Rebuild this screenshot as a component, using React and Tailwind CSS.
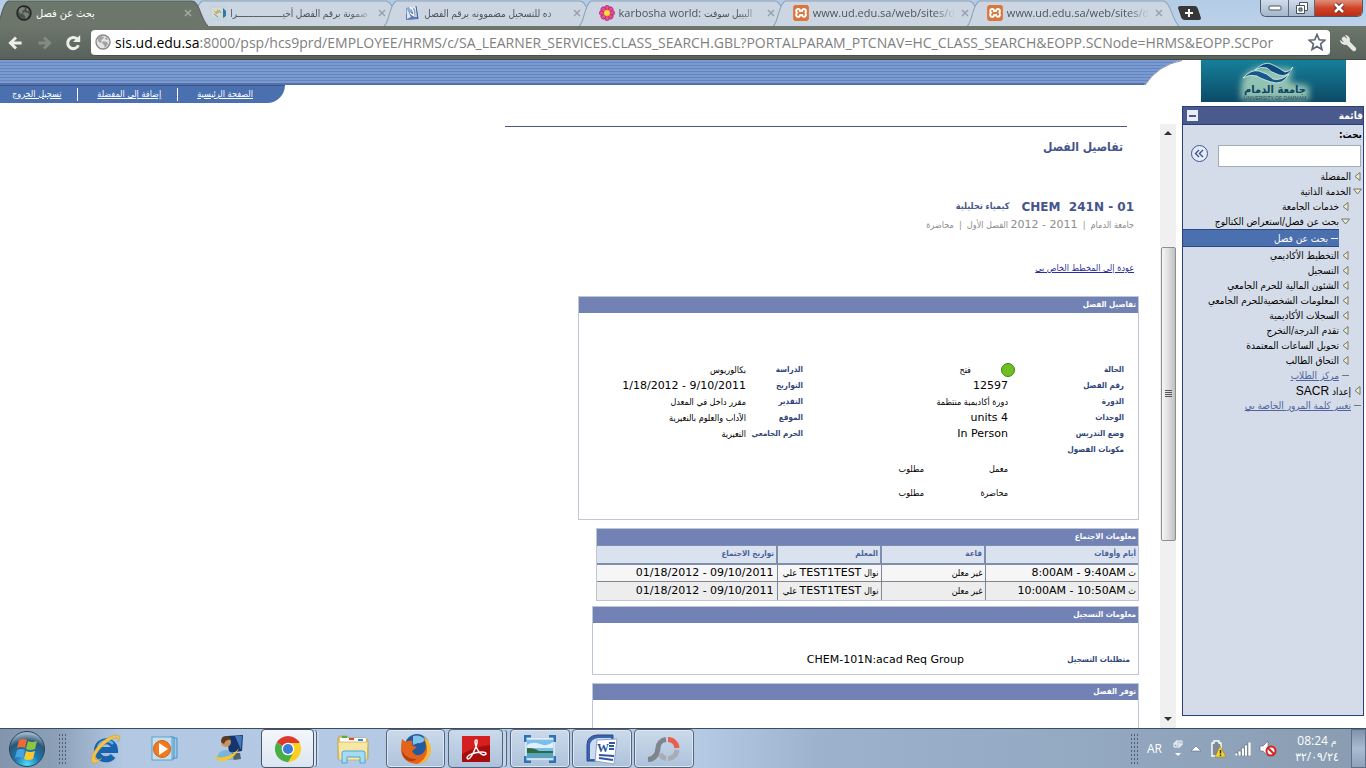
import { useState } from 'react';
import { SiXampp } from 'react-icons/si';

const LATIN = "font-['Open_Sans','DejaVu_Sans_Condensed','DejaVu_Sans',sans-serif]";
const URL_REST = ':8000/psp/hcs9prd/EMPLOYEE/HRMS/c/SA_LEARNER_SERVICES.CLASS_SEARCH.GBL?PORTALPARAM_PTCNAV=HC_CLASS_SEARCH&EOPP.SCNode=HRMS&EOPP.SCPor';

function Globe({ dark }) {
  return (
    <svg viewBox="0 0 16 16" className="w-4 h-4 shrink-0">
      <circle cx="8" cy="8" r="7" fill={dark ? '#4b504c' : '#e4e4e4'} stroke={dark ? '#1f2321' : '#8a8a8a'} strokeWidth="1.4" />
      <path d="M3 4l3-2 3 1-1 2-2 1 1 2-2 1-2-2zM8 7l4 1 1 2-3 4-1-3-2-2zM11 3l2 2-1 1-2-1z" fill={dark ? '#7c837e' : '#a3a3a3'} />
    </svg>
  );
}

function PictureIcon() {
  return (
    <svg viewBox="0 0 16 16" className="w-4 h-4 shrink-0">
      <rect width="16" height="16" fill="#c5d5de" />
      <rect x="2" y="3" width="10" height="9" fill="#d8dccb" />
      <path d="M3 5l3 2 2-3 1 4-3 1z" fill="#c9a568" />
      <path d="M4 9l4 3M9 5l2 3" stroke="#5d9ab8" />
      <path d="M13 3l3 3v5l-3 2z" fill="#2f79a8" />
    </svg>
  );
}

function PageIcon() {
  return (
    <svg viewBox="0 0 16 16" className="w-4 h-4 shrink-0">
      <path d="M2 3l3-1 1 3 4-2 2-1 1 12-11 1z" fill="#8ba4cc" />
      <path d="M2 9l11-3 1 8-12 1z" fill="#5c7bb2" />
      <path d="M3 4l4 8-4 2z" fill="#dde6f3" />
      <path d="M6 2q4 2 4 9L6 8M10 2l2 2v8" stroke="#fff" fill="none" strokeWidth="1.2" />
      <path d="M12 1l2 13" stroke="#3d5f96" fill="none" />
    </svg>
  );
}

function FlowerIcon() {
  return (
    <svg viewBox="0 0 16 16" className="w-4 h-4 shrink-0">
      {[0, 45, 90, 135, 180, 225, 270, 315].map((a) => (
        <circle key={a} cx="8" cy="2.800" r="2.400" fill="#ec4a96" stroke="#a81d62" strokeWidth=".7" transform={`rotate(${a} 8 8)`} />
      ))}
      <circle cx="8" cy="8" r="3.2" fill="#ffd84a" stroke="#c87f2a" strokeWidth=".6" />
    </svg>
  );
}

function XamppIcon() {
  return <SiXampp className="w-4 h-4 shrink-0 rounded-xs bg-white text-[#d9763c]" />;
}

const tabs = [
  { title: 'بحث عن فصل', icon: <Globe dark />, active: true },
  { title: 'ضمونة برقم الفصل أخيـــــــــــــــــرا', icon: <PictureIcon /> },
  { title: 'ده للتسجيل مضموونه برقم الفصل', icon: <PageIcon /> },
  { title: 'karbosha world:', tail: 'البيبل سوفت', icon: <FlowerIcon /> },
  { title: 'www.ud.edu.sa/web/sites/d', icon: <XamppIcon /> },
  { title: 'www.ud.edu.sa/web/sites/d', icon: <XamppIcon /> },
];

function Tab({ tab }) {
  const isArabic = /^[\u0600-\u06ff]/.test(tab.title);
  return (
    <div className={`relative flex-1 min-w-0 h-[26px] ${tab.active ? 'z-10' : ''}`}>
      <svg viewBox="0 0 206 26" preserveAspectRatio="none" className="absolute -left-1 top-0 w-[212px] h-[26px]">
        <path
          d="M0 26C5 24 5 4 12 1H190C198 1 199 20 206 26"
          fill={tab.active ? '#6c766b' : '#cbd6e2'}
          stroke={tab.active ? '#566056' : '#8fa1b6'}
        />
      </svg>
      <div className="relative flex items-center h-[26px] pl-4 gap-1">
        {tab.icon}
        <span className={`flex-1 min-w-0 overflow-hidden whitespace-nowrap ${isArabic ? 'text-[10px]' : 'text-[11px]'} ${tab.active ? 'text-white text-[11px]' : 'text-[#4c545c] [mask-image:linear-gradient(90deg,#000_85%,transparent)]'}`}>
          {tab.title}
          {tab.tail && <>&nbsp;<bdi className="text-[10px]">{tab.tail}</bdi></>}
        </span>
        <button aria-label="Close tab" className="w-3 h-3 shrink-0">
          <svg viewBox="0 0 12 12" className="w-3 h-3">
            <path d="M3 3l6 6M9 3l-6 6" stroke={tab.active ? '#a3aaa1' : '#97a2ae'} strokeWidth="1.5" />
          </svg>
        </button>
      </div>
    </div>
  );
}

function WindowButtons() {
  return (
    <div className="flex h-[17px] w-[103px] rounded-b-md border border-t-0 border-[#4d5a6b] overflow-hidden">
      <button aria-label="Minimize" className="w-7 flex items-center justify-center bg-linear-to-b from-[#d0dcea] to-[#a4b6cb] border-r border-[#5c6a7c]">
        <svg viewBox="0 0 14 6" className="w-[14px] h-[6px]"><rect x="1" y="1" width="12" height="4" rx="1" fill="#fff" stroke="#47525f" /></svg>
      </button>
      <button aria-label="Restore" className="w-[26px] flex items-center justify-center bg-linear-to-b from-[#d0dcea] to-[#a4b6cb] border-r border-[#5c6a7c]">
        <svg viewBox="0 0 12 12" className="w-3 h-3" fill="#fff" stroke="#47525f">
          <path d="M3.500 .5h8v8h-8z" />
          <path d="M.5 3.500h8v8h-8z" />
          <path d="M3 6h3v3H3z" fill="#8b9bb0" />
        </svg>
      </button>
      <button aria-label="Close" className="flex-1 flex items-center justify-center bg-linear-to-b from-[#e08e78] via-[#cf4326] to-[#bb2d16]">
        <svg viewBox="0 0 14 12" className="w-[14px] h-3">
          <path d="M3 2l8 8M11 2l-8 8" stroke="#5b2a24" strokeWidth="4.500" />
          <path d="M3 2l8 8M11 2l-8 8" stroke="#fff" strokeWidth="2.600" />
        </svg>
      </button>
    </div>
  );
}

function BrowserChrome() {
  return (
    <header className={`shrink-0 ${LATIN}`}>
      <div className="flex h-[26px] bg-linear-to-b from-[#b3cce6] to-[#bdd2ea]">
        <div className="flex flex-1 min-w-0 max-w-[1165px]">
          {tabs.map((t, i) => <Tab key={i} tab={t} />)}
        </div>
        <button aria-label="New tab" className="relative z-10 ml-3 mt-[6px] w-6 h-[15px]">
          <svg viewBox="0 0 24 15" className="w-6 h-[15px]">
            <path d="M1 2q0-2 2-2h15q2 0 3 3l3 9q0 2-2 2H8q-3 0-4-3z" fill="#353837" />
            <path d="M8 7h8M12 3v8" stroke="#fff" strokeWidth="2" />
          </svg>
        </button>
        <div className="ml-auto pr-[3px]"><WindowButtons /></div>
      </div>
      <div className="flex items-center h-[34px] pl-2 pr-2 border-b border-[#414b43] bg-linear-to-b from-[#6c766b] to-[#58625a]">
        <button aria-label="Back" className="w-5 h-5 mr-2">
          <svg viewBox="0 0 20 20" className="w-4 h-5"><path d="M17 10H4M10 3L3 10l7 7" stroke="#eceeec" strokeWidth="3.600" fill="none" /></svg>
        </button>
        <button aria-label="Forward" className="w-5 h-5 mr-2">
          <svg viewBox="0 0 20 20" className="w-4 h-5"><path d="M3 10h13M10 3l7 7-7 7" stroke="#838b82" strokeWidth="3.600" fill="none" /></svg>
        </button>
        <button aria-label="Reload" className="w-5 h-5 mr-[7px]">
          <svg viewBox="0 0 20 20" className="w-[18px] h-[18px]">
            <path d="M16 12.500A6.200 6.200 0 1 1 14.500 5.500" stroke="#eceeec" strokeWidth="3.400" fill="none" />
            <path d="M18 1v8h-8z" fill="#eceeec" />
          </svg>
        </button>
        <div className="flex flex-1 min-w-0 items-center h-[26px] px-1 gap-1 bg-white rounded-sm border-b border-[#474f48]">
          <Globe />
          <div className="flex-1 min-w-0 overflow-hidden whitespace-nowrap text-[14px] text-[#808080]">
            <span className="text-black">sis.ud.edu.sa</span>{URL_REST}
          </div>
          <button aria-label="Bookmark" className="w-[18px] h-[18px]">
            <svg viewBox="0 0 24 24" className="w-[18px] h-[18px]">
              <path d="M12 2l3 7 7.500.600-5.700 5 1.800 7.400-6.600-4-6.600 4 1.800-7.400-5.700-5L9 9z" fill="#fff" stroke="#5a6475" strokeWidth="2.200" />
            </svg>
          </button>
        </div>
        <button aria-label="Settings" className="w-5 h-5 ml-2">
          <svg viewBox="0 0 20 20" className="w-5 h-5">
            <path d="M6 6l10 10" stroke="#e4e7e3" strokeWidth="4.500" strokeLinecap="round" />
            <path d="M7 2a5 5 0 1 1-5 5l3 2 3-1 1-3z" fill="#e4e7e3" />
          </svg>
        </button>
      </div>
    </header>
  );
}

const portalLinks = ['الصفحة الرئيسية', 'إضافة إلى المفضلة', 'تسجيل الخروج'];

function Banner() {
  return (
    <div className="shrink-0">
      <div className="flex h-[25px]">
        <div className="flex-1 border-b-2 border-[#5670a8] bg-[repeating-linear-gradient(180deg,#7b9bd0_0px,#7b9bd0_2px,#6385c2_2px,#6385c2_3px)]" />
        <svg viewBox="0 0 38 25" className="w-[38px] h-[25px]">
          <defs>
            <pattern id="stripes" width="38" height="3" patternUnits="userSpaceOnUse">
              <rect width="38" height="2" fill="#7b9bd0" />
              <rect y="2" width="38" height="1" fill="#6385c2" />
            </pattern>
          </defs>
          <path d="M0 0H38Q14 5 1 25H0z" fill="url(#stripes)" />
          <path d="M38 .5Q14 5 1 25" fill="none" stroke="#8a93ad" />
        </svg>
      </div>
      <nav dir="rtl" className="flex items-center justify-between w-[285px] h-[18px] pr-8 pl-3 rounded-br-[18px] bg-[#4a70b0] border-t border-[#3c5690] text-[9px] text-white">
        {portalLinks.map((label, i) => (
          <a key={label} href="#" className={`underline ${i > 0 ? 'border-r border-white pr-4' : ''}`}>{label}</a>
        ))}
      </nav>
    </div>
  );
}

function Scrollbar() {
  return (
    <div className="flex flex-col items-center w-4 shrink-0 mr-[6px] bg-[#f0f0f0]">
      <svg viewBox="0 0 8 4" className="w-2 h-1 mt-[7px]"><path d="M0 4l4-4 4 4z" fill="#333" /></svg>
      <div className="mt-28 flex items-center justify-center w-[15px] h-[294px] rounded-xs border border-[#8e8e8e] bg-linear-to-r from-[#f6f6f6] via-[#dedee0] to-[#c0c0c4]">
        <svg viewBox="0 0 7 8" className="w-[7px] h-2"><path d="M0 .5h7M0 2.500h7M0 4.500h7M0 6.500h7" stroke="#555" /></svg>
      </div>
      <svg viewBox="0 0 8 4" className="w-2 h-1 mt-auto mb-[7px]"><path d="M0 0l4 4 4-4z" fill="#333" /></svg>
    </div>
  );
}

function Panel({ title, className, children }) {
  return (
    <section className={`w-full border border-[#bfc6d6] ${className}`}>
      <h3 className="h-4 px-[2px] leading-4 bg-[#7282b4] text-white text-[8px] font-bold">{title}</h3>
      {children}
    </section>
  );
}

const arabic = 'text-[9px]';
const latin = "font-['DejaVu_Sans',sans-serif] text-[11px]";

const details = [
  ['الحالة', 'فتح', 'الدراسة', 'بكالوريوس'],
  ['رقم الفصل', '12597', 'التواريخ', '1/18/2012 - 9/10/2011'],
  ['الدورة', 'دورة أكاديمية منتظمة', 'التقدير', 'مقرر داخل في المعدل'],
  ['الوحدات', 'units 4', 'الموقع', 'الآداب والعلوم بالنعيرية'],
  ['وضع التدريس', 'In Person', 'الحرم الجامعي', 'النعيرية'],
  ['مكونات الفصول', '', '', ''],
];

function Value({ children }) {
  const isArabic = /[\u0600-\u06ff]/.test(children);
  return <bdi dir={isArabic ? 'rtl' : 'ltr'} className={isArabic ? arabic : latin}>{children}</bdi>;
}

function ClassDetails() {
  return (
    <Panel title="تفاصيل الفصل" className="max-w-[561px] mb-2">
      <div className="pt-[49px] pr-[14px] pb-[13px]">
        {details.map(([label, value, label2, value2]) => (
          <div key={label} className="grid grid-cols-[116px_205px_57px_1fr] h-4 items-center whitespace-nowrap">
            <span className="text-[8px] font-bold text-[#2f4478]">{label}</span>
            <span className="flex items-center leading-4">
              {label === 'الحالة' && (
                <svg viewBox="0 0 14 14" className="w-[14px] h-[14px] -mr-[7px] ml-[30px]">
                  <circle cx="7" cy="7" r="6.500" fill="#6fbf22" stroke="#3c8414" />
                </svg>
              )}
              <Value>{value}</Value>
            </span>
            <span className="text-[8px] font-bold text-[#2f4478]">{label2}</span>
            <span className="flex items-center leading-4"><Value>{value2}</Value></span>
          </div>
        ))}
        {['معمل', 'محاضرة'].map((part) => (
          <div key={part} className="grid grid-cols-[116px_84px_1fr] h-6 items-center text-[9px]">
            <span />
            <span>{part}</span>
            <span>مطلوب</span>
          </div>
        ))}
      </div>
    </Panel>
  );
}

const meetings = [
  { time: '8:00AM - 9:40AM', bg: 'bg-[#f6f6f6]' },
  { time: '10:00AM - 10:50AM', bg: 'bg-[#ededed]' },
];

function MeetingTable() {
  return (
    <Panel title="معلومات الاجتماع" className="max-w-[543px] mb-[5px]">
      <table className="w-full table-fixed border-collapse whitespace-nowrap">
        <colgroup>
          <col className="w-[153px]" />
          <col className="w-[104px]" />
          <col className="w-[104px]" />
          <col />
        </colgroup>
        <thead>
          <tr className="h-[18px] bg-[#d9e2ee] text-[8px] text-[#4a5f98] border-t border-b-2 border-[#7e8fae]">
            {['أيام وأوقات', 'قاعة', 'المعلم', 'تواريخ الاجتماع'].map((h, i) => (
              <th key={h} scope="col" className={`p-0 pr-[2px] text-right font-bold leading-4 ${i < 3 ? 'border-l-2 border-[#7e8fae]' : ''}`}>{h}</th>
            ))}
          </tr>
        </thead>
        <tbody>
          {meetings.map((m, i) => (
            <tr key={m.time} className={`h-[18px] text-[9px] leading-4 ${m.bg} ${i === 0 ? 'border-b border-[#80858f]' : ''}`}>
              <td className="p-0 pr-[2px] border-l border-[#80858f]">ث <bdi dir="ltr" className={latin}>{m.time}</bdi></td>
              <td className="p-0 pr-[2px] border-l border-[#80858f]">غير معلن</td>
              <td className="p-0 pr-[2px] border-l border-[#80858f]">نوال <bdi className={latin}>TEST1TEST</bdi> علي</td>
              <td className="p-0 pr-[3px]"><bdi dir="ltr" className={latin}>01/18/2012 - 09/10/2011</bdi></td>
            </tr>
          ))}
        </tbody>
      </table>
    </Panel>
  );
}

function ClassPage() {
  return (
    <main dir="rtl" className="flex-1 min-w-0 overflow-hidden pt-[2px] pr-[21px] text-black">
      <hr className="w-full max-w-[622px] mr-3 border-[#4a5a8c]" />
      <h1 className="mt-2 mr-4 h-6 leading-6 text-[12px] font-bold text-[#45548c]">تفاصيل الفصل</h1>
      <h2 className="flex items-center gap-3 mt-[38px] mr-[5px] h-5 font-bold text-[#45548c]">
        <bdi dir="ltr" className="font-['DejaVu_Sans',sans-serif] text-[12px] whitespace-pre">CHEM  241N - 01</bdi>
        <span className="text-[9px]">كيمياء تحليلية</span>
      </h2>
      <p className="mr-[5px] h-4 leading-4 text-[9px] text-[#8c8c8c]">
        جامعة الدمام &nbsp;|&nbsp; <span className={latin}>2011 - 2012</span> الفصل الأول &nbsp;|&nbsp; محاضرة
      </p>
      <p className="mt-[27px] mr-[5px] mb-5 h-4 leading-4 text-[9px]">
        <a href="#" className="underline text-[#2a2f9c]">عودة إلى المخطط الخاص بي</a>
      </p>
      <ClassDetails />
      <MeetingTable />
      <Panel title="معلومات التسجيل" className="max-w-[547px] mb-2">
        <div className="flex items-center h-[51px] pt-6 pr-2">
          <span className="w-[166px] text-[8px] font-bold text-[#2f4478]">متطلبات التسجيل</span>
          <bdi dir="ltr" className={latin}>CHEM-101N:acad Req Group</bdi>
        </div>
      </Panel>
      <Panel title="توفر الفصل" className="max-w-[547px]">
        <div className="h-24" />
      </Panel>
    </main>
  );
}

function Logo() {
  return (
    <svg viewBox="0 0 145 42" className="w-[145px] h-[42px] ml-[19px]">
      <defs>
        <linearGradient id="sea" x1="0" y1="0" x2="0" y2="1">
          <stop offset="0" stopColor="#15809a" />
          <stop offset="1" stopColor="#0c4a66" />
        </linearGradient>
        <filter id="glow" x="-20%" y="-20%" width="140%" height="140%"><feGaussianBlur stdDeviation="3" /></filter>
      </defs>
      <rect width="145" height="42" fill="url(#sea)" />
      <path d="M42 17Q55 4 68 8L92 9 88 22 108 26V40H40V26z" fill="#bfe3c4" opacity=".75" filter="url(#glow)" />
      <path d="M54 10Q63 1 70 4T84 12Q88 12 92 7 87 18 78 15T66 8Q59 6 54 10z" fill="#0f4a7c" stroke="#e9f7ee" strokeWidth=".8" />
      <path d="M42 18Q50 9 58 11T72 19Q80 21 88 14 82 26 70 22T56 16Q48 14 42 18z" fill="#14588c" stroke="#e9f7ee" strokeWidth=".8" />
      <text x="74" y="33" textAnchor="middle" fontSize="11" fontWeight="bold" fontFamily="DejaVu Sans Condensed" fill="#0d4668">جامعة الدمام</text>
      <text x="74" y="40" textAnchor="middle" fontSize="5" fontFamily="Liberation Sans" fill="#1f4d5c">UNIVERSITY OF DAMMAM</text>
    </svg>
  );
}

const menu = [
  { label: 'المفضلة', level: 0, mark: 'closed' },
  { label: 'الخدمة الذاتية', level: 0, mark: 'open' },
  { label: 'خدمات الجامعة', level: 1, mark: 'closed' },
  { label: 'بحث عن فصل/استعراض الكتالوج', level: 1, mark: 'open' },
  { label: 'بحث عن فصل', level: 2, mark: 'dash', selected: true },
  { label: 'التخطيط الأكاديمي', level: 1, mark: 'closed' },
  { label: 'التسجيل', level: 1, mark: 'closed' },
  { label: 'الشئون المالية للحرم الجامعي', level: 1, mark: 'closed' },
  { label: 'المعلومات الشخصيةللحرم الجامعي', level: 1, mark: 'closed' },
  { label: 'السجلات الأكاديمية', level: 1, mark: 'closed' },
  { label: 'تقدم الدرجة/التخرج', level: 1, mark: 'closed' },
  { label: 'تحويل الساعات المعتمدة', level: 1, mark: 'closed' },
  { label: 'التحاق الطالب', level: 1, mark: 'closed' },
  { label: 'مركز الطلاب', level: 1, mark: 'dash', link: true },
  { label: 'إعداد SACR', level: 0, mark: 'closed' },
  { label: 'تغيير كلمة المرور الخاصة بي', level: 0, mark: 'dash', link: true },
];

function Mark({ kind, light }) {
  return (
    <svg viewBox="0 0 9 9" className="w-[9px] h-[9px] shrink-0" fill="#ecebd2" stroke="#77776a">
      {kind === 'closed' && <path d="M7 .5v8L2 4.500z" />}
      {kind === 'open' && <path d="M.5 2h8L4.500 7z" />}
      {kind === 'dash' && <path d="M1 4.500h7" stroke={light ? '#fff' : '#77776a'} />}
    </svg>
  );
}

function MenuItem({ item }) {
  if (item.selected) {
    return (
      <li className="mr-6 mb-px flex items-center gap-[2px] h-[18px] bg-[#4a70b0] border-y border-[#2c4a86] text-white">
        <Mark kind="dash" light />
        <a href="#">{item.label}</a>
      </li>
    );
  }
  return (
    <li className={`flex items-center gap-[2px] h-[15px] ${item.level ? 'pr-[13px]' : 'pr-px'}`}>
      <Mark kind={item.mark} />
      <a href="#" className={item.link ? 'underline text-[#50639c]' : ''}>
        {item.label.endsWith('SACR')
          ? <>إعداد <span className="font-['Liberation_Sans',sans-serif] text-[12px]">SACR</span></>
          : item.label}
      </a>
    </li>
  );
}

function Sidebar() {
  const [query, setQuery] = useState('');
  return (
    <aside className="flex flex-col w-[184px] shrink-0">
      <Logo />
      <div dir="rtl" className="flex flex-col flex-1 mt-1 mb-3 mr-[2px] border border-[#2a3f76] bg-[#d5dce9] text-[10px] text-black">
        <div className="flex items-center justify-between h-[18px] pl-1 bg-[#4a5a8c] border-b border-[#2a3f76]">
          <h2 className="font-bold text-white">قائمة</h2>
          <button aria-label="طي القائمة" className="flex items-center justify-center w-[11px] h-[11px] bg-[#e8edf6]">
            <span className="w-[7px] h-[2px] bg-[#4a5a8c]" />
          </button>
        </div>
        <label htmlFor="menu-search" className="pr-px mt-[2px] h-4 leading-4 font-bold">بحث:</label>
        <div className="flex items-start gap-[10px] pr-[2px] mt-[2px] mb-[2px]">
          <input id="menu-search" value={query} onChange={(e) => setQuery(e.target.value)} className="w-[143px] h-[22px] px-1 bg-white border border-[#a5abb5]" />
          <button aria-label="بحث" className="w-[17px] h-[17px] shrink-0">
            <svg viewBox="0 0 17 17" className="w-[17px] h-[17px]" fill="none" stroke="#3f5490">
              <circle cx="8.500" cy="8.500" r="8" fill="#e4ecfa" />
              <path d="M8 5L4.500 8.500 8 12M12 5L8.500 8.500 12 12" strokeWidth="1.400" />
            </svg>
          </button>
        </div>
        <ul className="whitespace-nowrap">
          {menu.map((item, i) => <MenuItem key={i} item={item} />)}
        </ul>
      </div>
    </aside>
  );
}

function Grip() {
  return <div className="w-[9px] h-8 shrink-0 bg-[radial-gradient(#4f5e70_1px,transparent_1px)] bg-[size:3px_4px]" />;
}

function StartOrb() {
  return (
    <svg viewBox="0 0 38 38" className="w-[38px] h-[38px]">
      <defs>
        <radialGradient id="orb" cx=".5" cy=".95" r=".9">
          <stop offset="0" stopColor="#4fe0f5" />
          <stop offset=".4" stopColor="#1d78b4" />
          <stop offset=".75" stopColor="#2c5677" />
          <stop offset="1" stopColor="#9fb8ca" />
        </radialGradient>
      </defs>
      <circle cx="19" cy="19" r="17.500" fill="url(#orb)" stroke="#27445c" />
      <path d="M11 10q4-2 8 0l-2 8q-4-2-8 0z" fill="#ee6a2e" />
      <path d="M20 11q4 2 9 0l-2 8q-5 2-9 0z" fill="#8cc63f" />
      <path d="M9 20q4-2 8 0l-2 8q-4-2-8 0z" fill="#45a3e0" />
      <path d="M18 21q4 2 9 0l-2 8q-5 2-9 0z" fill="#fdc82f" />
    </svg>
  );
}

function IeIcon() {
  return (
    <svg viewBox="0 0 32 32" className="w-8 h-8">
      <path d="M9 17h17a9 9 0 1 0-2 6" fill="none" stroke="#1663b0" strokeWidth="6" />
      <path d="M9 14a9 9 0 0 1 15-3" fill="none" stroke="#58b4ee" strokeWidth="2.500" />
      <path d="M4 30C-2 27 10 4 28 2c4 0 3 5 1 7 1-4 0-5-3-4C15 9 6 21 6 25c0 3 4 2 7 0-3 3-6 6-9 5z" fill="#f5c244" stroke="#c98f1f" strokeWidth=".4" />
    </svg>
  );
}

function MediaIcon() {
  return (
    <svg viewBox="0 0 32 32" className="w-8 h-8">
      <path d="M22 5h4v20h-4M19 4h4v22h-4" fill="#9dcbe6" stroke="#4b94c4" />
      <rect x="1" y="4" width="20" height="23" fill="#c3e0f1" stroke="#5e9fc8" />
      <circle cx="11" cy="16" r="8.500" fill="#f07a1d" stroke="#d55f12" />
      <path d="M8 10l9 6-9 6z" fill="#fff" />
    </svg>
  );
}

function MessengerIcon() {
  return (
    <svg viewBox="0 0 32 32" className="w-8 h-8">
      <path d="M14 3l16-1-1 16-13 2z" fill="#14356e" />
      <path d="M22 3l7 0-1 14z" fill="#4777bd" />
      <circle cx="13" cy="9" r="5" fill="#c79563" />
      <path d="M8 9q0-7 6-6 4 1 4 4-5-1-7 4z" fill="#5c3d22" />
      <path d="M4 27q0-9 8-10 8 0 9 10z" fill="#79b5df" />
      <path d="M19 20l8 0 1 6-7 1z" fill="#55606d" />
      <path d="M2 21q1 5 9 3 10-2 15-9-4 11-15 13-9 1-9-7z" fill="#f6c62e" />
    </svg>
  );
}

function ChromeIcon() {
  return (
    <svg viewBox="0 0 32 32" className="w-[30px] h-[30px]">
      <path d="M16 16L3.900 9A14 14 0 0 1 28.100 9z" fill="#de3a2b" />
      <path d="M16 16L28.100 9A14 14 0 0 1 16 30z" fill="#fcd021" />
      <path d="M16 16V30A14 14 0 0 1 3.900 9z" fill="#4aae48" />
      <path d="M16 9.500H28.400L22 19.500z" fill="#fcd021" />
      <path d="M16 9.500H28.400L27 7H10z" fill="#de3a2b" />
      <path d="M10 19.500l6 3 5-1-5 8.500z" fill="#4aae48" />
      <circle cx="16" cy="16" r="6.700" fill="#fff" />
      <circle cx="16" cy="16" r="5.400" fill="#3a7fd5" />
    </svg>
  );
}

function ExplorerIcon() {
  return (
    <svg viewBox="0 0 34 32" className="w-[34px] h-8">
      <path d="M2 5l2-2h7l2 2h17l2 3v18H2z" fill="#e8c965" stroke="#bb9640" strokeWidth=".7" />
      <path d="M4 5h26v4H4z" fill="#fff" />
      <path d="M6 3h5v2H6z" fill="#4cae4c" />
      <path d="M13 5h5v2h-5z" fill="#d9482f" />
      <path d="M22 6h5v2h-5z" fill="#3f86cf" />
      <path d="M2 9h30l-1 18H3z" fill="#f7e7a4" stroke="#cdaa52" strokeWidth=".7" />
      <path d="M6 30V20q0-2 2-2h19q2 0 2 2v10h-5v-6H11v6z" fill="#a7daf3" stroke="#4ea5d4" />
    </svg>
  );
}

function FirefoxIcon() {
  return (
    <svg viewBox="0 0 32 32" className="w-8 h-8">
      <circle cx="17" cy="13" r="12" fill="#245a9e" />
      <path d="M13 3q8-2 12 4-3 4-7 3l-5 2z" fill="#7cc3ee" />
      <path d="M2 6l4 3q3-2 7-1-2 3 0 5l4 1-5 4q2 5 8 4 5-2 6-8 0-4-2-8 6 4 6 12-1 12-13 13Q3 30 1 18 1 11 2 6z" fill="#e4631b" />
      <path d="M23 3q9 6 8 16-3 11-14 12 9-4 10-13 0-9-4-15z" fill="#f9b934" />
      <path d="M2 18q5 9 15 8-5 4-10 1T2 18z" fill="#b83b0e" />
    </svg>
  );
}

function AcrobatIcon() {
  return (
    <svg viewBox="0 0 28 26" className="w-7 h-[26px]">
      <rect width="28" height="26" fill="#a80c0c" />
      <path d="M0 0h28v9Q14 10 0 18z" fill="#d42020" />
      <path d="M5 22c0-3 8-6 15-6 5 0 5 3 2 3-4 0-9-8-9-13 0-3 3-3 2 1-1 5-6 16-9 16z" fill="none" stroke="#fff" strokeWidth="1.400" />
    </svg>
  );
}

function PhotoIcon() {
  return (
    <svg viewBox="0 0 32 28" className="w-8 h-7">
      <rect x="2" y="4" width="28" height="20" fill="#7cbdea" stroke="#fff" />
      <path d="M3 10q6-4 13-1t13-2v6H3z" fill="#dff0fb" />
      <path d="M3 13q8 0 12 3h14v3H3z" fill="#2f6b41" />
      <path d="M3 18h26v5H3z" fill="#5aa3bd" />
      <path d="M1 7V1h6M25 1h6v6M31 21v6h-6M7 27H1v-6" fill="none" stroke="#2d73b4" strokeWidth="3" />
    </svg>
  );
}

function WordIcon() {
  return (
    <svg viewBox="0 0 34 32" className="w-[34px] h-8">
      <path d="M2 28V12Q2 3 12 2h16v26z" fill="#3b64ae" stroke="#274884" />
      <path d="M5 26V13q0-7 8-8h13v21z" fill="#cddcf2" />
      <path d="M12 7l20-1-3 25-19-3z" fill="#fff" stroke="#90a4c8" />
      <text x="12" y="19" fontSize="12" fontWeight="bold" fontFamily="Liberation Serif" fill="#274f9f">W</text>
      <path d="M24 10h6M24 13h5M24 16h5M14 22l15 1M14 25l14 2" stroke="#2f57a5" strokeWidth="1.800" />
    </svg>
  );
}

function RingIcon() {
  return (
    <svg viewBox="0 0 34 30" className="w-[34px] h-[30px]" fill="none" strokeWidth="5">
      <path d="M21 5.500A9 9 0 0 1 30 14" stroke="#e8604c" />
      <path d="M30 16A9 9 0 0 1 21 24.500" stroke="#a9adb3" />
      <path d="M19 24.500A9 9 0 0 1 13 20" stroke="#a9adb3" />
      <path d="M19 5.500A9 9 0 0 0 11 14Q10 25 1 25.500" stroke="#7f858c" />
    </svg>
  );
}

function TaskButton({ label, className, children }) {
  return (
    <button aria-label={label} className={`flex items-center justify-center h-[39px] shrink-0 ${className}`}>
      {children}
    </button>
  );
}

const framed = 'rounded-sm border border-[#53657c] bg-linear-to-b from-[#cbdaea] to-[#adc2db] shadow-[inset_0_0_0_1px_#dde8f3]';

function Taskbar() {
  return (
    <footer className="flex items-center h-10 shrink-0 border-t border-[#3f4a5c] bg-[linear-gradient(90deg,#8295ac_0,#8b9fb7_4%,#b2c8e3_9%,#b5cbe5_51%,#9cb2cd_60%,#93a8c1_80%,#899cb1_100%)]">
      <TaskButton label="Start" className="ml-2"><StartOrb /></TaskButton>
      <div className="ml-3 mr-[7px]"><Grip /></div>
      <TaskButton label="Internet Explorer" className="w-[62px]"><IeIcon /></TaskButton>
      <TaskButton label="Media Player" className="w-[62px]"><MediaIcon /></TaskButton>
      <TaskButton label="Messenger" className="w-[62px]"><MessengerIcon /></TaskButton>
      <TaskButton label="Chrome" className="w-[53px] ml-px rounded-sm border border-[#46566b] bg-linear-to-b from-[#f4f7fb] to-[#dbe5f1] shadow-[3px_0_0_-1px_#dbe5f1,4px_0_0_-1px_#53657c,7px_0_0_-2px_#c9d8e9]"><ChromeIcon /></TaskButton>
      <TaskButton label="Explorer" className="w-[62px] ml-2"><ExplorerIcon /></TaskButton>
      <TaskButton label="Firefox" className={`w-[59px] ml-[2px] ${framed}`}><FirefoxIcon /></TaskButton>
      <TaskButton label="Acrobat" className="w-[55px] ml-[3px] rounded-sm border border-[#53657c] bg-linear-to-b from-[#cbdaea] to-[#adc2db] shadow-[4px_0_0_-1px_#c3d4e7,5px_0_0_-1px_#53657c]"><AcrobatIcon /></TaskButton>
      <TaskButton label="Photos" className={`w-[60px] ml-[7px] ${framed}`}><PhotoIcon /></TaskButton>
      <TaskButton label="Word" className={`w-[60px] ml-[2px] ${framed}`}><WordIcon /></TaskButton>
      <TaskButton label="Recorder" className={`w-[60px] ml-[2px] ${framed}`}><RingIcon /></TaskButton>
      <div className={`flex items-center h-full ml-auto text-white text-[12px] ${LATIN}`}>
        <Grip />
        <span className="ml-2 w-5 leading-4">AR</span>
        <svg viewBox="0 0 10 18" className="w-[10px] h-[18px] ml-[6px]">
          <path d="M3 1h6v4H3zM1 3h6v4H1z" fill="#93a8c1" stroke="#fff" />
          <path d="M2 13h6l-3 3z" fill="#fff" />
        </svg>
        <svg viewBox="0 0 10 6" className="w-[10px] h-[6px] ml-2"><path d="M0 5l5-5 5 5z" fill="#fff" stroke="#5b6c80" strokeWidth=".6" /></svg>
        <svg viewBox="0 0 18 18" className="w-[18px] h-[18px] ml-2">
          <path d="M5 3V1h5v2h2v13H3V3z" fill="#7d8b99" stroke="#fff" strokeWidth="1.400" />
          <path d="M11 6l6 11H6z" fill="#f7d432" stroke="#a07f10" strokeWidth=".6" />
          <path d="M11.500 10v3.500M11.500 14.500v1.500" stroke="#222" strokeWidth="1.400" />
        </svg>
        <svg viewBox="0 0 16 14" className="w-4 h-[14px] ml-2" fill="#fff" stroke="#4b5a6b" strokeWidth=".5">
          <path d="M0 11h3v3H0zM3 9h3v5H3zM6.500 6h3v8h-3zM9.500 3h3v11h-3zM13 0h3v14h-3z" />
        </svg>
        <svg viewBox="0 0 18 18" className="w-[18px] h-[18px] ml-2">
          <path d="M1 6h3l5-5v15l-5-5H1z" fill="#fff" stroke="#56657a" strokeWidth=".6" />
          <circle cx="12" cy="11" r="4.500" fill="#fff" stroke="#d42424" strokeWidth="2" />
          <path d="M9 8l6 6" stroke="#d42424" strokeWidth="2" />
        </svg>
        <div className="w-14 ml-3 mr-[6px] text-center leading-4">
          <div>08:24 <span className="text-[10px]">م</span></div>
          <div dir="ltr">٣٢/٠٩/٢٤</div>
        </div>
        <button aria-label="Show desktop" className="w-[15px] h-full border border-[#5d6f86] bg-linear-to-b from-[#7e93ac] via-[#a9bbd0] to-[#8da2bb]" />
      </div>
    </footer>
  );
}

export default function App() {
  return (
    <div className="flex flex-col h-screen overflow-hidden bg-white font-['DejaVu_Sans_Condensed','DejaVu_Sans',sans-serif]">
      <BrowserChrome />
      <div className="flex flex-1 min-h-0">
        <div className="flex flex-col flex-1 min-w-0">
          <Banner />
          <div className="flex flex-1 min-h-0 mt-[21px]">
            <ClassPage />
            <Scrollbar />
          </div>
        </div>
        <Sidebar />
      </div>
      <Taskbar />
    </div>
  );
}
